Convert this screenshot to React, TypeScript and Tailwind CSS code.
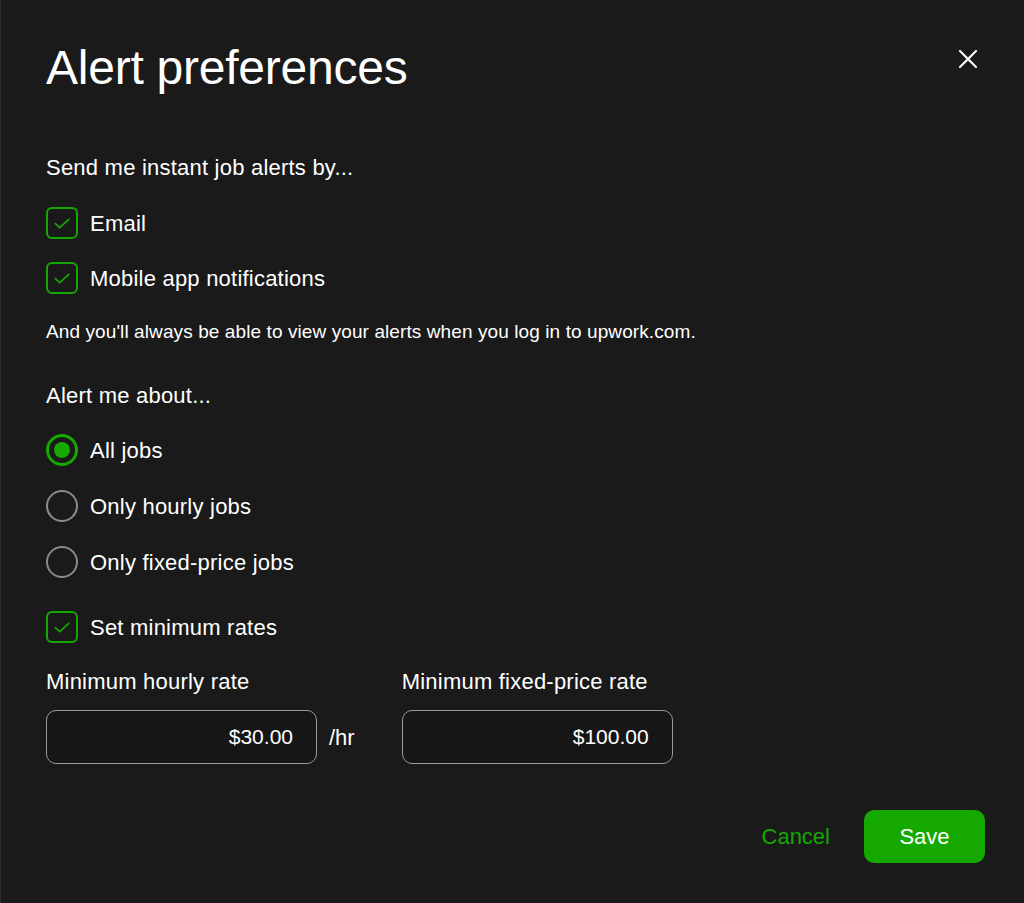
import { X } from "lucide-react";

function Check() {
  return (
    <span className="flex h-[32px] w-[32px] shrink-0 items-center justify-center rounded-[6px] border-2 border-[#14a800]">
      <svg width="18" height="18" viewBox="0 0 16 16" fill="none">
        <path d="M2 8.6l4 3.6L14 4.8" stroke="#14a800" strokeWidth="1.5" strokeLinecap="round" strokeLinejoin="round" />
      </svg>
    </span>
  );
}

function Radio({ checked }: { checked?: boolean }) {
  return checked ? (
    <span className="flex h-[32px] w-[32px] shrink-0 items-center justify-center rounded-full border-[3px] border-[#14a800]">
      <span className="h-[16px] w-[16px] rounded-full bg-[#14a800]" />
    </span>
  ) : (
    <span className="h-[32px] w-[32px] shrink-0 rounded-full border-2 border-[#8a8a8a]" />
  );
}

function Row({ control, label }: { control: React.ReactNode; label: string }) {
  return (
    <label className="flex h-[32px] items-center gap-[12px] text-[22px] tracking-[0.01em]">
      {control}
      <span>{label}</span>
    </label>
  );
}

function RateInput({ value }: { value: string }) {
  return (
    <div className="flex h-[54px] w-[271px] items-center justify-end rounded-[10px] border border-[#9a9a9a] bg-[#161616] pr-[23px] text-[21px]">
      {value}
    </div>
  );
}

export default function App() {
  return (
    <div className="min-h-[903px] border-l border-[#2e2e2e] bg-[#1a1a1a] pl-[45px] pr-[39px] pt-[40px] font-['Liberation_Sans',Arial,sans-serif] text-white">
      <header className="flex items-start justify-between">
        <h1 className="text-[48px] leading-[56px] tracking-[-0.005em]">Alert preferences</h1>
        <button className="mr-[1px] mt-[3px] text-white">
          <X size={32} strokeWidth={1.6} />
        </button>
      </header>

      <p className="mt-[58px] text-[22px] leading-[28px] tracking-[0.01em]">Send me instant job alerts by...</p>
      <div className="mt-[25px] flex flex-col gap-[23px]">
        <Row control={<Check />} label="Email" />
        <Row control={<Check />} label="Mobile app notifications" />
      </div>
      <p className="mt-[26px] text-[19px] leading-[24px] tracking-[0.005em]">
        And you'll always be able to view your alerts when you log in to upwork.com.
      </p>

      <p className="mt-[38px] text-[22px] leading-[28px] tracking-[0.01em]">Alert me about...</p>
      <div className="mt-[24px] flex flex-col gap-[24px]">
        <Row control={<Radio checked />} label="All jobs" />
        <Row control={<Radio />} label="Only hourly jobs" />
        <Row control={<Radio />} label="Only fixed-price jobs" />
      </div>

      <div className="mt-[33px]">
        <Row control={<Check />} label="Set minimum rates" />
      </div>

      <div className="mt-[25px] flex">
        <div>
          <p className="text-[22px] leading-[28px] tracking-[0.01em]">Minimum hourly rate</p>
          <div className="mt-[14px] flex items-center gap-[12px]">
            <RateInput value="$30.00" />
            <span className="text-[22px]">/hr</span>
          </div>
        </div>
        <div className="ml-[47px]">
          <p className="text-[22px] leading-[28px] tracking-[0.01em]">Minimum fixed-price rate</p>
          <div className="mt-[14px]">
            <RateInput value="$100.00" />
          </div>
        </div>
      </div>

      <div className="mt-[46px] flex items-center justify-end gap-[34px]">
        <button className="text-[22px] text-[#14a800]">Cancel</button>
        <button className="h-[53px] w-[121px] rounded-[10px] bg-[#14a800] text-[22px] font-medium text-white">
          Save
        </button>
      </div>
    </div>
  );
}
